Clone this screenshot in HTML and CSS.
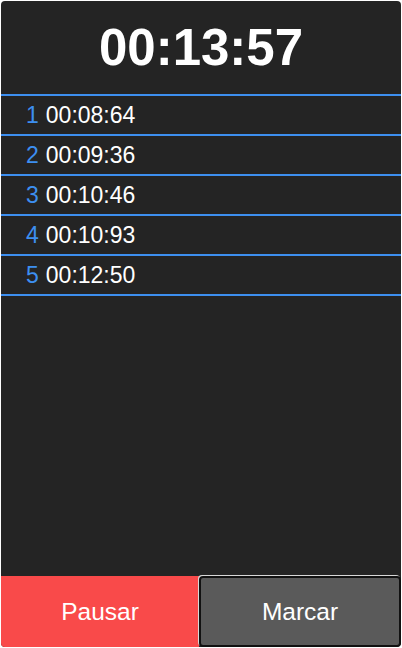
FILE: index.html
```html
<!DOCTYPE html>
<html lang="es">
<head>
<meta charset="utf-8">
<title>Cronómetro</title>
<link rel="stylesheet" href="styles.css">
</head>
<body>
<div class="app">
  <header class="display">00:13:57</header>
  <ul class="laps">
    <li class="lap"><span class="num">1</span><span class="time">00:08:64</span></li>
    <li class="lap"><span class="num">2</span><span class="time">00:09:36</span></li>
    <li class="lap"><span class="num">3</span><span class="time">00:10:46</span></li>
    <li class="lap"><span class="num">4</span><span class="time">00:10:93</span></li>
    <li class="lap"><span class="num">5</span><span class="time">00:12:50</span></li>
  </ul>
  <div class="controls">
    <button class="btn btn-pause">Pausar</button>
    <button class="btn btn-mark">Marcar</button>
  </div>
</div>
</body>
</html>
```
FILE: styles.css
```css
html, body {
  margin: 0;
  padding: 0;
  background: #ffffff;
}
body {
  padding: 1px;
  font-family: "Liberation Sans", Arial, sans-serif;
}
.app {
  width: 400px;
  height: 646px;
  background: #242424;
  border-radius: 4px;
  overflow: hidden;
  display: flex;
  flex-direction: column;
}
.display {
  height: 93px;
  display: flex;
  align-items: center;
  justify-content: center;
  color: #ffffff;
  font-weight: bold;
  font-size: 51px;
}
.laps {
  list-style: none;
  margin: 0;
  padding: 0;
  flex: 1;
}
.lap {
  height: 38px;
  border-top: 2px solid #3d8ff0;
  display: flex;
  align-items: center;
  gap: 7px;
  padding-left: 25px;
  font-size: 23px;
  color: #ffffff;
}
.lap:last-child {
  border-bottom: 2px solid #3d8ff0;
}
.num {
  color: #3d8ff0;
}
.controls {
  display: flex;
  height: 71px;
}
.btn {
  flex: 1;
  margin: 0;
  font-family: "Liberation Sans", Arial, sans-serif;
  font-size: 24.5px;
  color: #ffffff;
  cursor: pointer;
}
.btn-pause {
  background: #f94a4a;
  border: none;
  border-radius: 0;
}
.btn-mark {
  background: #5a5a5a;
  border: 2px solid #111111;
  border-radius: 4px;
  box-shadow: -1px -1px 0 #d8d8d8;
}
```
